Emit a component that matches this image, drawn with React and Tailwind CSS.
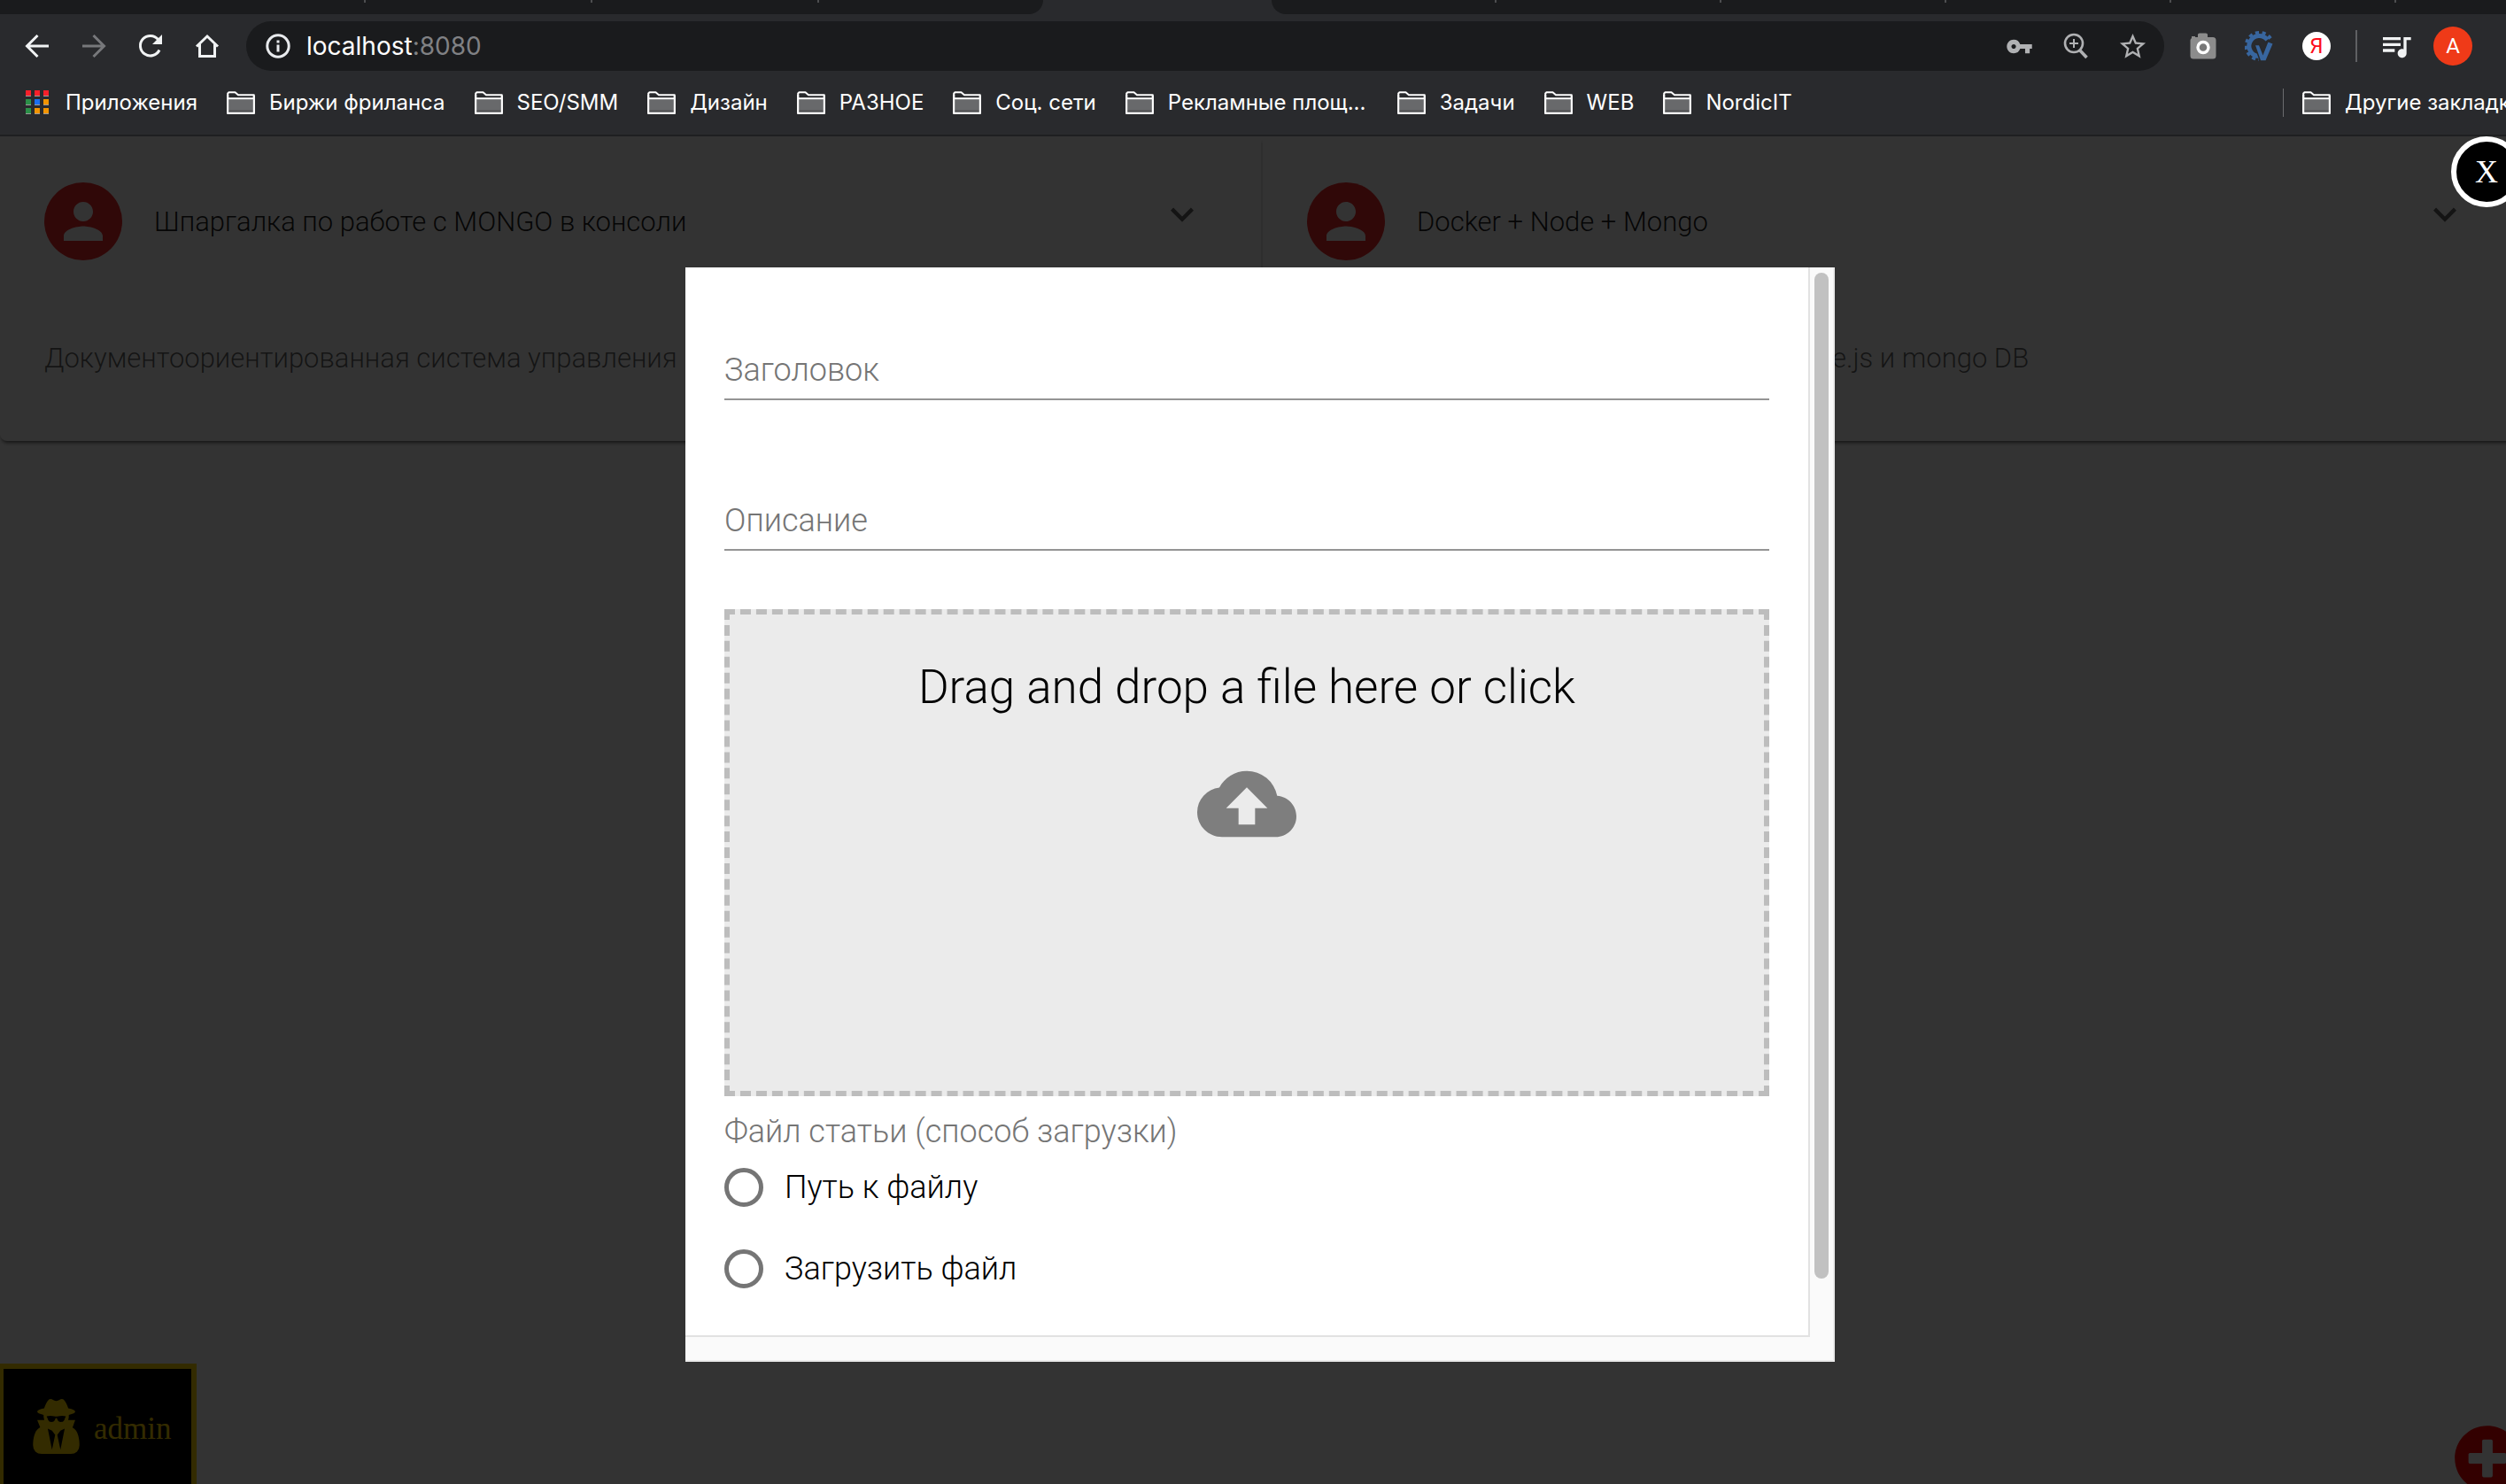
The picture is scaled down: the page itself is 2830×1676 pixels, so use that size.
import { FaPlusCircle } from "react-icons/fa";
import {
  MdCloudUpload,
  MdExpandMore,
  MdPerson,
  MdQueueMusic,
  MdStarBorder,
  MdVpnKey,
} from "react-icons/md";

const bookmarks = [
  "Биржи фриланса",
  "SEO/SMM",
  "Дизайн",
  "РАЗНОЕ",
  "Соц. сети",
  "Рекламные площ...",
  "Задачи",
  "WEB",
  "NordicIT",
];

const articles = [
  {
    title: "Шпаргалка по работе с MONGO в консоли",
    text: "Документоориентированная система управления",
  },
  {
    title: "Docker + Node + Mongo",
    text: "Как собирать Docker контейнеры для node.js и mongo DB",
  },
];

function Tabs() {
  return (
    <div className="flex h-4 bg-[#292a2d]" aria-hidden="true">
      <div className="flex w-[1178px] rounded-br-2xl bg-[#1a1b1d]">
        <i className="ml-[411px] h-[3px] w-0.5 bg-[#4d4e50]" />
        <i className="ml-[254px] h-[3px] w-0.5 bg-[#4d4e50]" />
        <i className="ml-[254px] h-[3px] w-0.5 bg-[#4d4e50]" />
      </div>
      <div className="w-[258px]" />
      <div className="flex flex-1 rounded-bl-2xl bg-[#1a1b1d]">
        <i className="ml-[252px] h-[3px] w-0.5 bg-[#4d4e50]" />
        <i className="ml-[252px] h-[3px] w-0.5 bg-[#4d4e50]" />
        <i className="ml-[252px] h-[3px] w-0.5 bg-[#4d4e50]" />
        <i className="ml-[252px] h-[3px] w-0.5 bg-[#4d4e50]" />
        <i className="ml-[252px] h-[3px] w-0.5 bg-[#4d4e50]" />
      </div>
    </div>
  );
}

function IconButton({ label, children }) {
  return (
    <button type="button" aria-label={label} className="flex h-14 w-16 items-center justify-center">
      {children}
    </button>
  );
}

function Toolbar() {
  return (
    <div className="flex items-center pt-2 pl-2.5">
      <IconButton label="Назад">
        <svg width="28" height="28" viewBox="0 0 28 28" fill="none" stroke="#f1f3f4" strokeWidth="3">
          <path d="M27 14H3M14.500 2 2.500 14l12 12" />
        </svg>
      </IconButton>
      <IconButton label="Вперёд">
        <svg width="28" height="28" viewBox="0 0 28 28" fill="none" stroke="#77787b" strokeWidth="3">
          <path d="M1 14h24M13.500 2l12 12-12 12" />
        </svg>
      </IconButton>
      <IconButton label="Обновить">
        <svg width="28" height="28" viewBox="0 0 28 28">
          <path d="M24 18.500A11.300 11.300 0 1 1 22.500 6.500" fill="none" stroke="#f1f3f4" strokeWidth="3" />
          <path d="M27 1v11H16z" fill="#f1f3f4" />
        </svg>
      </IconButton>
      <IconButton label="Главная">
        <svg width="28" height="28" viewBox="0 0 28 28" fill="none" stroke="#f1f3f4" strokeWidth="3">
          <path d="M2 14.500 14 3l12 11.500M5.500 12v13.500h17V12" />
        </svg>
      </IconButton>
      <div className="ml-3 mr-3 flex h-14 flex-1 items-center rounded-full bg-[#1a1b1d] pl-[22px] pr-1">
        <svg width="28" height="28" viewBox="0 0 28 28" fill="none" stroke="#e8eaed" strokeWidth="3">
          <circle cx="14" cy="14" r="12.2" />
          <path d="M14 12.500v8M14 7.500v3" />
        </svg>
        <div
          role="textbox"
          aria-label="Адресная строка"
          tabIndex={0}
          className="ml-[18px] flex-1 text-[28px] leading-10 text-white"
        >
          localhost<span className="text-[#808184]">:8080</span>
        </div>
        <IconButton label="Пароли">
          <MdVpnKey size={31} color="#b0b1b3" />
        </IconButton>
        <IconButton label="Масштаб">
          <svg width="28" height="30" viewBox="0 0 28 30" fill="none" stroke="#b0b1b3">
            <circle cx="12" cy="12" r="10" strokeWidth="2.6" />
            <path d="M12 7v10M7 12h10" strokeWidth="2" />
            <path d="m18.500 19.500 8 8.500" strokeWidth="3.600" />
          </svg>
        </IconButton>
        <IconButton label="В закладки">
          <MdStarBorder size={35} color="#b0b1b3" />
        </IconButton>
      </div>
      <IconButton label="Снимок экрана">
        <svg width="30" height="30" viewBox="0 0 30 30">
          <path d="M9 5V2q0-1.500 2-1.500h7q2 0 2 1.500v3h6q3.500 0 3.500 3.500V26q0 3.500-3.500 3.500H4Q.5 29.500.5 26V8.500Q.5 7 2 6V4h4v1z" fill="#8c8c8c" />
          <circle cx="15" cy="16.500" r="6" fill="#777" stroke="#fff" strokeWidth="3.400" />
        </svg>
      </IconButton>
      <IconButton label="Расширение">
        <svg width="34" height="36" viewBox="0 0 34 36" fill="none" stroke="#38669f">
          <path d="M25.500 11A11.500 11.500 0 1 0 16 29.500" strokeWidth="5" />
          <path d="M29 9.500A15 15 0 1 0 16 33" strokeWidth="4" strokeDasharray="4 3.500" />
          <path d="M11 16.500h5.500l4 10L26 12.500l6.500 2.500-8.500 20h-6.500z" fill="#38669f" stroke="#292a2d" strokeWidth="1.500" />
        </svg>
      </IconButton>
      <IconButton label="Яндекс">
        <span className="flex size-8 items-center justify-center rounded-full bg-white font-[Roboto] text-[24px] leading-8 text-[#fc0d1b]">
          Я
        </span>
      </IconButton>
      <i className="mx-3 h-9 w-0.5 bg-[#5f6063]" />
      <IconButton label="Управление мультимедиа">
        <MdQueueMusic size={40} color="#f1f3f4" />
      </IconButton>
      <button
        type="button"
        aria-label="Профиль"
        className="ml-2.5 mr-[38px] size-11 rounded-full bg-[#ef3a18] font-[Roboto] text-[24px] leading-[44px] text-white"
      >
        A
      </button>
    </div>
  );
}

function FolderIcon() {
  return (
    <svg width="32" height="26" viewBox="0 0 32 26" className="shrink-0">
      <path d="M2.500 1.200h7L13 4.200h17.800v20.600H1.200V2.500z" fill="#292a2d" stroke="#fff" strokeWidth="2" strokeLinejoin="round" />
      <path d="M2 9h28v15H2z" fill="#68696b" />
      <path d="M2 21.500h28V24H2z" fill="#505153" />
      <path d="M1 8.200h30" stroke="#fff" strokeWidth="2" />
      <path d="M1.200 4v20.800h29.600V5" fill="none" stroke="#fff" strokeWidth="2" />
    </svg>
  );
}

function AppsIcon() {
  const colors = [
    "#f8202a", "#f8202a", "#f8202a",
    "#2b9048", "#1a6ff0", "#f29400",
    "#2b9048", "#f29400", "#f29400",
  ];
  return (
    <svg width="26" height="28" viewBox="0 0 26 28" className="shrink-0">
      {colors.map((c, i) => (
        <g key={i}>
          <rect x={(i % 3) * 10} y={Math.floor(i / 3) * 10 + 1} width="6" height="6" fill="#9a9a9a" />
          <rect x={(i % 3) * 10} y={Math.floor(i / 3) * 10} width="6" height="6" fill={c} />
        </g>
      ))}
    </svg>
  );
}

function Bookmarks() {
  return (
    <nav className="flex h-[72px] items-center overflow-hidden border-b-2 border-[#1e1f21] pl-[29px] text-[24px] leading-8 whitespace-nowrap text-white box-content" aria-label="Закладки">
      <div className="flex items-center gap-[33px]">
        <a href="#apps" className="flex items-center gap-[19px]">
          <AppsIcon />
          Приложения
        </a>
        {bookmarks.map((name) => (
          <a key={name} href="#folder" className="flex items-center gap-4">
            <FolderIcon />
            <span className={name.endsWith("...") ? "w-[226px]" : ""}>{name}</span>
          </a>
        ))}
      </div>
      <div className="ml-auto flex w-[252px] items-center overflow-hidden">
        <i className="h-8 w-px shrink-0 bg-[#6b6c6f]" />
        <a href="#other" className="ml-[21px] flex items-center gap-4">
          <FolderIcon />
          Другие закладки
        </a>
      </div>
    </nav>
  );
}

function ArticleCard({ title, text }) {
  return (
    <article className="rounded-b-lg bg-white pt-[52px] pb-[69px] pl-[50px] pr-[63px] font-light shadow-[0_4px_4px_-2px_rgba(0,0,0,0.6)]">
      <header className="flex items-center">
        <span className="flex size-[88px] shrink-0 items-center justify-center rounded-full bg-[#f02828] text-white">
          <MdPerson size={66} />
        </span>
        <h2 className="ml-9 flex-1 pt-0.5 text-[31px] leading-10 text-black/90">{title}</h2>
        <button type="button" aria-label="Развернуть" className="mb-4 text-black/60">
          <MdExpandMore size={52} />
        </button>
      </header>
      <p className="mt-[87px] text-[31px] leading-[48px] whitespace-nowrap text-black/60">{text}</p>
    </article>
  );
}

function SecretUserIcon() {
  return (
    <svg width="53" height="62" viewBox="0 0 1408 1664" fill="currentColor">
      <path d="M576 1536l96-448-96-128-128-64zm256 0l128-640-128 64-96 128zm160-1010q-2-4-4-6-10-8-96-8-70 0-167 19-7 2-21 2t-21-2q-97-19-167-19-86 0-96 8-2 2-4 6 2 18 4 27 2 3 7.500 6.500t7.500 10.500q2 4 7.500 20.500t7 20.500 7.500 17 8.500 17 9 14 12 13.500 14 9.500 17.500 8 20.500 4 24.500 2q36 0 59-12.500t32.500-30 14.500-34.500 11.500-29.500 17.500-12.500h12q11 0 17.500 12.500t11.500 29.500 14.500 34.500 32.500 30 59 12.500q13 0 24.500-2t20.500-4 17.500-8 14-9.500 12-13.500 9-14 8.500-17 7.500-17 7-20.500 7.500-20.500q2-7 7.500-10.500t7.500-6.500q2-9 4-27zm416 879q0 121-73 190t-194 69h-874q-121 0-194-69t-73-190q0-61 4.500-118t19-125.500 37.500-123.500 63.500-103.500 93.500-74.500l-90-220h214q-22-64-22-128 0-12 2-32-194-40-194-96 0-57 210-99 17-62 51.500-134t70.500-114q32-37 76-37 30 0 84 31t84 31 84-31 84-31q44 0 76 37 36 42 70.500 114t51.500 134q210 42 210 99 0 56-194 96 7 81-20 160h214l-82 225q63 33 107.500 96.500t65.500 143.500 29 151.500 8 148.500z" />
    </svg>
  );
}

function UploadOption({ id, label }) {
  return (
    <div className="flex h-11 items-center gap-6">
      <input
        type="radio"
        id={id}
        name="upload"
        className="size-11 appearance-none rounded-full border-5 border-[#757575] bg-white checked:bg-[#757575]"
      />
      <label htmlFor={id} className="text-[36px] leading-11 text-black">
        {label}
      </label>
    </div>
  );
}

function ArticleDialog() {
  return (
    <section
      role="dialog"
      aria-label="Новая статья"
      className="grid w-full max-w-[1298px] grid-cols-[1fr_30px] grid-rows-[auto_30px] bg-[#fafafa]"
    >
      <form className="flex flex-col bg-white px-11 pt-[84px] pb-[53px] font-light">
        <input
          type="text"
          aria-label="Заголовок"
          placeholder="Заголовок"
          className="h-[66px] border-b-2 border-[#949494] text-[36px] leading-11 placeholder:text-[#757575] placeholder:opacity-100"
        />
        <input
          type="text"
          aria-label="Описание"
          placeholder="Описание"
          className="mt-[104px] h-[66px] border-b-2 border-[#949494] text-[36px] leading-11 placeholder:text-[#757575] placeholder:opacity-100"
        />
        <button
          type="button"
          className="mt-[66px] flex h-[550px] flex-col items-center border-6 border-dashed border-[#bdbdbd] bg-[#ebebeb] pt-[50px] text-black"
        >
          <span className="text-[53px] leading-[64px]">Drag and drop a file here or click</span>
          <MdCloudUpload size={112} color="#7e7e7e" className="mt-11" />
        </button>
        <fieldset className="mt-[18px]">
          <legend className="text-[36px] leading-11 text-[#757575]">Файл статьи (способ загрузки)</legend>
          <div className="mt-[19px] flex flex-col gap-12">
            <UploadOption id="by-path" label="Путь к файлу" />
            <UploadOption id="by-file" label="Загрузить файл" />
          </div>
        </fieldset>
      </form>
      <div className="flex justify-center border-x-2 border-l-[#e2e2e2] border-r-[#ebebeb] pt-1.5 pb-16">
        <div className="w-4 rounded-full bg-[#c1c1c1]" />
      </div>
      <div className="col-span-2 flex border-r-2 border-b-2 border-[#ebebeb]">
        <div className="h-0.5 flex-1 bg-[#e2e2e2]" />
        <div className="w-[26px]" />
      </div>
    </section>
  );
}

export default function App() {
  return (
    <div className="flex min-h-screen flex-col bg-white font-[Roboto,sans-serif]">
      <header className="bg-[#292a2d] font-[Inter,sans-serif]">
        <Tabs />
        <Toolbar />
        <Bookmarks />
      </header>
      <main className="relative flex-1 overflow-hidden bg-white">
        <div className="grid w-[calc(100%+20px)] grid-cols-2 gap-0.5">
          {articles.map((a) => (
            <ArticleCard key={a.title} {...a} />
          ))}
        </div>
        <div className="absolute -bottom-1.5 -left-0.5 flex h-[142px] w-56 items-center gap-4 border-6 border-[#ffd700] bg-black pl-[33px] font-[Liberation_Serif,serif] text-[35px] leading-10 text-[#ffd700]">
          <SecretUserIcon />
          <span className="pt-1.5">admin</span>
        </div>
        <button
          type="button"
          aria-label="Добавить статью"
          className="absolute -right-[17px] -bottom-[9px] text-[#ff0000]"
        >
          <FaPlusCircle size={76} />
        </button>
        <div className="absolute top-0 left-0 -right-4 -bottom-2.5 flex items-center justify-center bg-black/80">
          <ArticleDialog />
        </div>
        <button
          type="button"
          aria-label="Закрыть"
          className="absolute top-0 -right-[18px] size-20 rounded-full border-6 border-white bg-black font-[Liberation_Serif,serif] text-[36px] leading-10 text-white"
        >
          X
        </button>
      </main>
    </div>
  );
}
